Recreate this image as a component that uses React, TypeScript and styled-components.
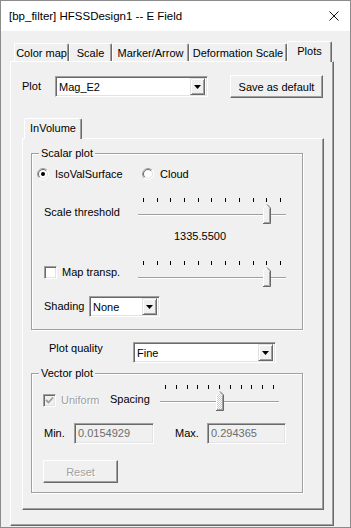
import React from 'react';
import styled, { createGlobalStyle, css } from 'styled-components';

const COLORS = {
  FACE: '#f0f0f0',
  LIGHT: '#ffffff',
  SHADOW: '#a0a0a0',
  DARK: '#696969',
  MID: '#e3e3e3',
  GRAYTEXT: '#a0a0a0',
  FIELDTEXT: '#6d6d6d',
};

const GlobalStyle = createGlobalStyle`
  html, body {
    margin: 0;
    padding: 0;
    background: ${COLORS.FACE};
  }
  body {
    font-family: "Liberation Sans", Arial, sans-serif;
    font-size: 11px;
    color: #000;
  }
  * {
    box-sizing: border-box;
  }
`;

const raised = css`
  border: 1px solid;
  border-color: ${COLORS.LIGHT} ${COLORS.DARK} ${COLORS.DARK} ${COLORS.LIGHT};
  box-shadow: inset -1px -1px 0 ${COLORS.SHADOW};
`;

const sunken = css`
  border: 1px solid;
  border-color: ${COLORS.SHADOW} ${COLORS.LIGHT} ${COLORS.LIGHT} ${COLORS.SHADOW};
  box-shadow: inset 1px 1px 0 ${COLORS.DARK}, inset -1px -1px 0 ${COLORS.MID};
`;

const Arrow = () => (
  <svg width="7" height="4" viewBox="0 0 7 4">
    <polygon points="0,0 7,0 3.5,4" fill="#000" />
  </svg>
);

const Combo = ({ width, value }: { width: number; value: string }) => (
  <S.Combo $w={width}>
    <S.ComboText>{value}</S.ComboText>
    <S.DropButton>
      <Arrow />
    </S.DropButton>
  </S.Combo>
);

const Radio = ({ checked }: { checked?: boolean }) => (
  <svg width="12" height="12" viewBox="0 0 12 12">
    <circle cx="6" cy="6" r="5.5" fill="#fff" />
    <path d="M2.1,9.9 A5.5,5.5 0 0 1 9.9,2.1" stroke={COLORS.SHADOW} fill="none" />
    <path d="M9.9,2.1 A5.5,5.5 0 0 1 2.1,9.9" stroke={COLORS.LIGHT} fill="none" />
    <path d="M2.8,9.2 A4.5,4.5 0 0 1 9.2,2.8" stroke={COLORS.DARK} fill="none" />
    <path d="M9.2,2.8 A4.5,4.5 0 0 1 2.8,9.2" stroke={COLORS.MID} fill="none" />
    {checked && <circle cx="6" cy="6" r="2" fill="#000" />}
  </svg>
);

const CheckBox = ({ checked, disabled }: { checked?: boolean; disabled?: boolean }) => (
  <S.CheckBox $disabled={disabled}>
    {checked && (
      <svg width="9" height="9" viewBox="0 0 9 9">
        <polyline points="1,4 3.5,6.5 8,1.5" stroke={disabled ? COLORS.GRAYTEXT : '#000'} strokeWidth="1.8" fill="none" />
      </svg>
    )}
  </S.CheckBox>
);

interface SliderProps {
  width: number;
  ticks: number;
  value: number;
  dotted?: boolean;
}
const INSET = 5;
const Slider = ({ width, ticks, value, dotted }: SliderProps) => {
  const span = width - INSET * 2 - 1;
  const left = INSET + value * span - 3.5;
  const fillId = dotted ? 'url(#dots)' : COLORS.FACE;
  return (
    <S.Slider $w={width}>
      <S.Ticks>
        {Array.from({ length: ticks }).map((_, i) => (
          <S.Tick key={i} />
        ))}
      </S.Ticks>
      <S.Track />
      <S.Thumb style={{ left }}>
        <svg width="8" height="20" viewBox="0 0 8 20">
          <defs>
            <pattern id="dots" width="2" height="2" patternUnits="userSpaceOnUse">
              <rect width="2" height="2" fill="#fff" />
              <rect width="1" height="1" fill="#c8c8c8" />
              <rect x="1" y="1" width="1" height="1" fill="#c8c8c8" />
            </pattern>
          </defs>
          <polygon points="0,4 4,0 8,4 8,20 0,20" fill={fillId} />
          <path d="M0.5,19 L0.5,4 L4,0.5" stroke={COLORS.LIGHT} fill="none" />
          <path d="M4,0.5 L7.5,4 L7.5,19.5 L0,19.5" stroke={COLORS.DARK} fill="none" />
          <path d="M6.5,4.5 L6.5,18.5 L1,18.5" stroke={COLORS.SHADOW} fill="none" />
        </svg>
      </S.Thumb>
    </S.Slider>
  );
};

const App = () => {
  return (
    <>
      <GlobalStyle />
      <S.Window>
        <S.TitleBar>
          <span>[bp_filter] HFSSDesign1 -- E Field</span>
          <svg width="10" height="10" viewBox="0 0 10 10">
            <path d="M0.5,0.5 L9.5,9.5 M9.5,0.5 L0.5,9.5" stroke="#111" strokeWidth="1" />
          </svg>
        </S.TitleBar>
        <S.Body>
          <S.TabStrip $pl={4}>
            <S.Tab $w={55}>Color map</S.Tab>
            <S.Tab $w={43}>Scale</S.Tab>
            <S.Tab $w={77}>Marker/Arrow</S.Tab>
            <S.Tab $w={98}>Deformation Scale</S.Tab>
            <S.Tab $w={45} $active>
              Plots
            </S.Tab>
          </S.TabStrip>
          <S.TabPanel $w={324} $h={465}>
            <S.PlotRow>
              <S.Label $w={33}>Plot</S.Label>
              <Combo width={153} value="Mag_E2" />
              <S.PushButton $w={93}>Save as default</S.PushButton>
            </S.PlotRow>

            <S.InnerTabStrip $pl={13}>
              <S.Tab $w={58} $active>
                InVolume
              </S.Tab>
            </S.InnerTabStrip>
            <S.InnerPanel $w={302} $h={372}>
              <S.Group $h={177} $mt={14}>
                <S.Legend>Scalar plot</S.Legend>
                <S.RadioRow>
                  <S.RadioOption $w={105}>
                    <Radio checked />
                    <span>IsoValSurface</span>
                  </S.RadioOption>
                  <S.RadioOption $w={60}>
                    <Radio />
                    <span>Cloud</span>
                  </S.RadioOption>
                </S.RadioRow>

                <S.SliderRow $mt={17} $pl={12}>
                  <S.SliderLabel $w={94}>Scale threshold</S.SliderLabel>
                  <Slider width={148} ticks={11} value={0.9} />
                </S.SliderRow>
                <S.ValueText>1335.5500</S.ValueText>

                <S.SliderRow $mt={18} $pl={12}>
                  <S.CheckOption $w={94}>
                    <CheckBox />
                    <S.CheckText>Map transp.</S.CheckText>
                  </S.CheckOption>
                  <Slider width={148} ticks={11} value={0.9} />
                </S.SliderRow>

                <S.ShadingRow>
                  <S.Label $w={45}>Shading</S.Label>
                  <Combo width={71} value="None" />
                </S.ShadingRow>
              </S.Group>

              <S.QualityRow>
                <S.QualityLabel>Plot quality</S.QualityLabel>
                <Combo width={143} value="Fine" />
              </S.QualityRow>

              <S.Group $h={120} $mt={10}>
                <S.Legend>Vector plot</S.Legend>
                <S.SliderRow $mt={11} $pl={11}>
                  <S.CheckOption $w={67} $top={9}>
                    <CheckBox checked disabled />
                    <S.CheckText $disabled>Uniform</S.CheckText>
                  </S.CheckOption>
                  <S.SliderLabel $w={50}>Spacing</S.SliderLabel>
                  <Slider width={119} ticks={11} value={0.5} dotted />
                </S.SliderRow>

                <S.MinMaxRow>
                  <S.Label $w={30}>Min.</S.Label>
                  <S.Field $w={80}>0.0154929</S.Field>
                  <S.Label $w={32} $ml={21}>
                    Max.
                  </S.Label>
                  <S.Field $w={79}>0.294365</S.Field>
                </S.MinMaxRow>

                <S.ResetButton $w={75} disabled>
                  Reset
                </S.ResetButton>
              </S.Group>
            </S.InnerPanel>
          </S.TabPanel>
        </S.Body>
      </S.Window>
    </>
  );
};

export default App;

interface SizeProps {
  $w?: number;
  $h?: number;
}
interface TabProps {
  $w: number;
  $active?: boolean;
}
interface SpaceProps {
  $mt?: number;
  $pl?: number;
  $ml?: number;
  $top?: number;
}
interface DisabledProps {
  $disabled?: boolean;
}

const S = {
  Window: styled.div`
    width: 351px;
    height: 528px;
    border: 1px solid #8c8c8c;
    background: ${COLORS.FACE};
    display: flex;
    flex-direction: column;
    overflow: hidden;
  `,
  TitleBar: styled.div`
    height: 30px;
    flex-shrink: 0;
    background: #fff;
    display: flex;
    align-items: center;
    justify-content: space-between;
    padding: 0 11px 0 8px;
    font-size: 11.5px;
    color: #000;
  `,
  Body: styled.div`
    padding: 10px 0 0 9px;
  `,
  TabStrip: styled.div<SpaceProps>`
    height: 20px;
    display: flex;
    align-items: flex-end;
    padding-left: ${(p) => p.$pl ?? 0}px;
  `,
  InnerTabStrip: styled.div<SpaceProps>`
    height: 20px;
    margin-top: 20px;
    display: flex;
    align-items: flex-end;
    padding-left: ${(p) => p.$pl ?? 0}px;
  `,
  Tab: styled.div<TabProps>`
    width: ${(p) => p.$w}px;
    height: 18px;
    display: flex;
    align-items: center;
    justify-content: center;
    white-space: nowrap;
    background: ${COLORS.FACE};
    border-top: 1px solid ${COLORS.LIGHT};
    border-left: 1px solid ${COLORS.LIGHT};
    border-right: 1px solid ${COLORS.DARK};
    box-shadow: inset -1px 0 0 ${COLORS.SHADOW};
    border-radius: 2px 2px 0 0;
    ${(p) =>
      p.$active &&
      css`
        height: 21px;
        margin-bottom: -1px;
        padding-bottom: 3px;
        position: relative;
        z-index: 1;
      `}
  `,
  TabPanel: styled.div<SizeProps>`
    width: ${(p) => p.$w}px;
    height: ${(p) => p.$h}px;
    ${raised}
  `,
  InnerPanel: styled.div<SizeProps>`
    width: ${(p) => p.$w}px;
    height: ${(p) => p.$h}px;
    margin-left: 11px;
    ${raised}
  `,
  PlotRow: styled.div`
    height: 23px;
    margin-top: 13px;
    padding-left: 11px;
    display: flex;
    align-items: center;
  `,
  Label: styled.div<SizeProps & SpaceProps>`
    width: ${(p) => p.$w}px;
    margin-left: ${(p) => p.$ml ?? 0}px;
    flex-shrink: 0;
    white-space: nowrap;
    line-height: 13px;
  `,
  Combo: styled.div<SizeProps>`
    width: ${(p) => p.$w}px;
    height: 21px;
    flex-shrink: 0;
    background: #fff;
    display: flex;
    align-items: center;
    justify-content: space-between;
    padding: 2px;
    ${sunken}
  `,
  ComboText: styled.span`
    padding-left: 1px;
  `,
  DropButton: styled.div`
    width: 15px;
    height: 17px;
    display: flex;
    align-items: center;
    justify-content: center;
    background: ${COLORS.FACE};
    border: 1px solid;
    border-color: ${COLORS.MID} ${COLORS.DARK} ${COLORS.DARK} ${COLORS.MID};
    box-shadow: inset 1px 1px 0 ${COLORS.LIGHT}, inset -1px -1px 0 ${COLORS.SHADOW};
  `,
  PushButton: styled.button<SizeProps>`
    width: ${(p) => p.$w}px;
    height: 23px;
    margin-left: 22px;
    padding: 0;
    font: inherit;
    color: #000;
    background: ${COLORS.FACE};
    ${raised}
  `,
  ResetButton: styled.button<SizeProps>`
    display: block;
    width: ${(p) => p.$w}px;
    height: 23px;
    margin: 16px 0 0 11px;
    padding: 0;
    font: inherit;
    color: ${COLORS.GRAYTEXT};
    text-shadow: 1px 1px 0 ${COLORS.LIGHT};
    background: ${COLORS.FACE};
    ${raised}
  `,
  Group: styled.div<SizeProps & SpaceProps>`
    position: relative;
    width: 272px;
    height: ${(p) => p.$h}px;
    margin: ${(p) => p.$mt ?? 0}px 0 0 8px;
    border: 1px solid ${COLORS.SHADOW};
    box-shadow: 1px 1px 0 ${COLORS.LIGHT}, inset 1px 1px 0 ${COLORS.LIGHT};
  `,
  Legend: styled.span`
    position: absolute;
    top: -7px;
    left: 7px;
    padding: 0 2px;
    line-height: 13px;
    background: ${COLORS.FACE};
  `,
  RadioRow: styled.div`
    height: 14px;
    margin-top: 13px;
    padding-left: 5px;
    display: flex;
    align-items: center;
  `,
  RadioOption: styled.div<SizeProps>`
    width: ${(p) => p.$w}px;
    display: flex;
    align-items: center;
    gap: 6px;
    white-space: nowrap;
  `,
  SliderRow: styled.div<SpaceProps>`
    display: flex;
    align-items: flex-start;
    margin-top: ${(p) => p.$mt ?? 0}px;
    padding-left: ${(p) => p.$pl ?? 0}px;
  `,
  SliderLabel: styled.div<SizeProps>`
    width: ${(p) => p.$w}px;
    flex-shrink: 0;
    margin-top: 8px;
    line-height: 13px;
    white-space: nowrap;
  `,
  CheckOption: styled.div<SizeProps & SpaceProps>`
    width: ${(p) => p.$w}px;
    flex-shrink: 0;
    margin-top: ${(p) => p.$top ?? 5}px;
    display: flex;
    align-items: center;
  `,
  CheckBox: styled.div<DisabledProps>`
    width: 13px;
    height: 13px;
    flex-shrink: 0;
    display: flex;
    align-items: center;
    justify-content: center;
    background: ${(p) => (p.$disabled ? COLORS.FACE : '#fff')};
    ${sunken}
  `,
  CheckText: styled.span<DisabledProps>`
    margin-left: 5px;
    line-height: 13px;
    white-space: nowrap;
    color: ${(p) => (p.$disabled ? COLORS.GRAYTEXT : '#000')};
    ${(p) =>
      p.$disabled &&
      css`
        text-shadow: 1px 1px 0 ${COLORS.LIGHT};
      `}
  `,
  Slider: styled.div<SizeProps>`
    position: relative;
    width: ${(p) => p.$w}px;
    height: 27px;
    flex-shrink: 0;
  `,
  Ticks: styled.div`
    height: 4px;
    padding: 0 ${INSET}px;
    display: flex;
    justify-content: space-between;
  `,
  Tick: styled.div`
    width: 1px;
    height: 4px;
    background: #000;
  `,
  Track: styled.div`
    height: 2px;
    margin-top: 12px;
    border-top: 1px solid ${COLORS.SHADOW};
    border-bottom: 1px solid ${COLORS.LIGHT};
  `,
  Thumb: styled.div`
    position: absolute;
    top: 6px;
    width: 8px;
    height: 20px;
    line-height: 0;
  `,
  ValueText: styled.div`
    margin-top: 5px;
    padding-left: 142px;
    line-height: 13px;
  `,
  ShadingRow: styled.div`
    margin-top: 8px;
    padding-left: 12px;
    display: flex;
    align-items: center;
  `,
  QualityRow: styled.div`
    margin-top: 12px;
    padding-left: 26px;
    display: flex;
    align-items: flex-start;
  `,
  QualityLabel: styled.div`
    width: 84px;
    flex-shrink: 0;
    line-height: 13px;
  `,
  MinMaxRow: styled.div`
    height: 21px;
    margin-top: 11px;
    padding-left: 12px;
    display: flex;
    align-items: center;
  `,
  Field: styled.div<SizeProps>`
    width: ${(p) => p.$w}px;
    height: 21px;
    flex-shrink: 0;
    padding: 0 0 2px 3px;
    display: flex;
    align-items: center;
    color: ${COLORS.FIELDTEXT};
    background: ${COLORS.FACE};
    ${sunken}
  `,
};
